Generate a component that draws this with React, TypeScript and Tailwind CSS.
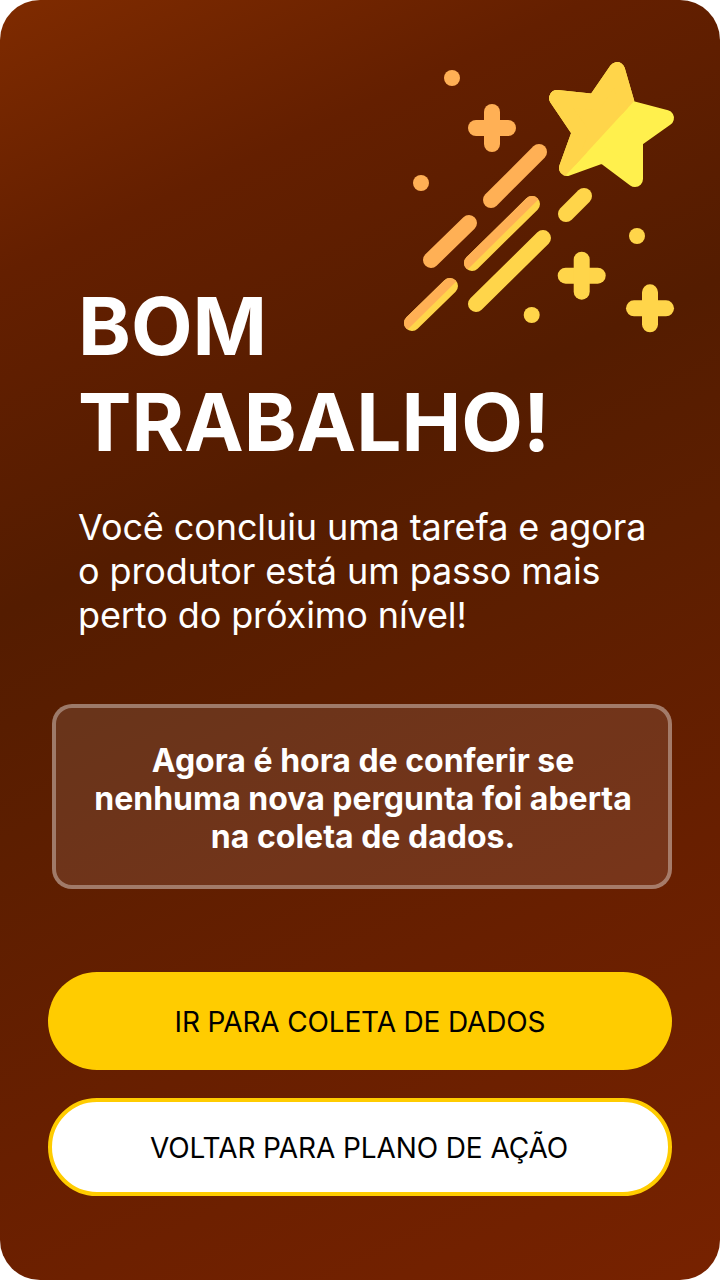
const STAR = "M617 70 L628 108 L666 118 L635 140 L635 179 L603 155 L567 168 L580 132 L557 98 L595 102 Z";

function Plus({ x, y, color }: { x: number; y: number; color: string }) {
  return (
    <g stroke={color} strokeWidth={16} strokeLinecap="round">
      <line x1={x - 16} y1={y} x2={x + 16} y2={y} />
      <line x1={x} y1={y - 16} x2={x} y2={y + 16} />
    </g>
  );
}

function Stripe({ a, b, c, d, color }: { a: number; b: number; c: number; d: number; color: string }) {
  return <line x1={a} y1={b} x2={c} y2={d} stroke={color} strokeWidth={16} strokeLinecap="round" />;
}

function TwoTone({ a, b, c, d, id }: { a: number; b: number; c: number; d: number; id: string }) {
  const points = `${a - 19},${b + 21} ${c + 21},${d - 19} ${c - 19},${d - 59} ${a - 59},${b - 19}`;
  return (
    <g>
      <clipPath id={id}>
        <polygon points={points} />
      </clipPath>
      <Stripe a={a} b={b} c={c} d={d} color="#FFD54A" />
      <g clipPath={`url(#${id})`}>
        <Stripe a={a} b={b} c={c} d={d} color="#FFB055" />
      </g>
    </g>
  );
}

function Shooting() {
  const orange = "#FFB055";
  const yellow = "#FFD54A";
  return (
    <svg className="absolute left-0 top-0" width={720} height={345} viewBox="0 0 720 345" fill="none">
      <circle cx={452} cy={78} r={8} fill={orange} />
      <circle cx={421} cy={183} r={8} fill={orange} />
      <circle cx={637} cy={236} r={8} fill={yellow} />
      <circle cx={531.7} cy={315} r={8} fill={yellow} />
      <Plus x={492} y={128} color={orange} />
      <Plus x={581.7} y={275.7} color={yellow} />
      <Plus x={650} y={308.3} color={yellow} />
      <Stripe a={491} b={200} c={539} d={152} color={orange} />
      <Stripe a={431} b={260} c={469} d={223} color={orange} />
      <TwoTone a={472} b={263} c={532} d={204} id="a" />
      <TwoTone a={412} b={323} c={450} d={286} id="b" />
      <Stripe a={566} b={214} c={584} d={196} color={yellow} />
      <Stripe a={476} b={304} c={543} d={238} color={yellow} />
      <clipPath id="starclip">
        <polygon points="535,50 636,50 636,99 556,186 535,186" />
      </clipPath>
      <path d={STAR} fill="#FFF04D" stroke="#FFF04D" strokeWidth={16} strokeLinejoin="round" />
      <path d={STAR} fill={yellow} stroke={yellow} strokeWidth={16} strokeLinejoin="round" clipPath="url(#starclip)" />
    </svg>
  );
}

export default function App() {
  return (
    <div className="bg-white w-[720px] h-[1280px]">
      <div className="relative w-[720px] h-[1280px] rounded-[40px] overflow-hidden bg-[linear-gradient(155deg,#7f2b00_0%,#641f00_17%,#541c00_38%,#5c1e00_52%,#681f00_72%,#772200_100%)] [font-family:Inter,sans-serif] pt-[278px]">
        <Shooting />
        <h1 className="relative pl-[78px] text-white text-[80px] leading-[96px] font-bold">
          BOM
          <br />
          TRABALHO!
        </h1>
        <p className="relative mt-[35px] pl-[78px] text-white text-[36px] leading-[44px] font-normal tracking-[-0.1px]">
          Você concluiu uma tarefa e agora
          <br />
          o produtor está um passo mais
          <br />
          perto do próximo nível!
        </p>
        <div className="relative mt-[67px] ml-[52px] w-[620px] h-[185px] rounded-[20px] border-4 border-white/35 bg-white/10 flex items-center justify-center text-center text-white text-[32px] leading-[38px] font-bold pt-[5px] pl-[2px]">
          <p>
            Agora é hora de conferir se
            <br />
            nenhuma nova pergunta foi aberta
            <br />
            na coleta de dados.
          </p>
        </div>
        <div className="relative mt-[83px] mx-[48px] flex flex-col gap-[28px]">
          <div className="h-[98px] rounded-full bg-[#ffcc00] flex items-center justify-center text-black text-[28px] tracking-[-0.15px] pt-[2px]">
            IR PARA COLETA DE DADOS
          </div>
          <div className="h-[98px] rounded-full bg-white border-4 border-[#ffcc00] flex items-center justify-center text-black text-[28px] tracking-[-0.1px] pr-[2px] pt-[1px]">
            VOLTAR PARA PLANO DE AÇÃO
          </div>
        </div>
      </div>
    </div>
  );
}
